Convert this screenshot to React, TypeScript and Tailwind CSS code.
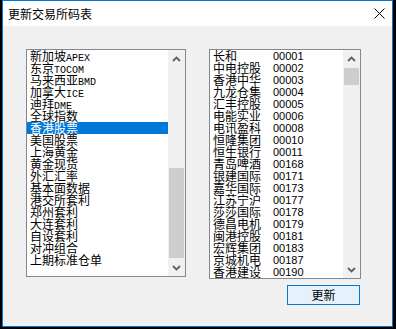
import React from "react";

const leftItems = [
  "新加坡APEX",
  "东京TOCOM",
  "马来西亚BMD",
  "加拿大ICE",
  "迪拜DME",
  "全球指数",
  "香港股票",
  "美国股票",
  "上海黄金",
  "黄金现货",
  "外汇汇率",
  "基本面数据",
  "港交所套利",
  "郑州套利",
  "大连套利",
  "自设套利",
  "对冲组合",
  "上期标准仓单",
];

const rightItems: [string, string][] = [
  ["长和", "00001"],
  ["中电控股", "00002"],
  ["香港中华", "00003"],
  ["九龙仓集", "00004"],
  ["汇丰控股", "00005"],
  ["电能实业", "00006"],
  ["电讯盈科", "00008"],
  ["恒隆集团", "00010"],
  ["恒生银行", "00011"],
  ["青岛啤酒", "00168"],
  ["银建国际", "00171"],
  ["嘉华国际", "00173"],
  ["江苏宁沪", "00177"],
  ["莎莎国际", "00178"],
  ["德昌电机", "00179"],
  ["闽港控股", "00181"],
  ["宏辉集团", "00183"],
  ["京城机电", "00187"],
  ["香港建设", "00190"],
];

// 中文 + 拉丁字母混排, 拉丁部分用等宽衬线
function Label({ text }: { text: string }) {
  const parts = text.split(/([A-Za-z]+)/).filter((p) => p !== "");
  return (
    <>
      {parts.map((p, i) =>
        /[A-Za-z]/.test(p) ? (
          <span key={i} className="font-['Liberation_Mono',monospace] text-[10px]">
            {p}
          </span>
        ) : (
          <span key={i}>{p}</span>
        )
      )}
    </>
  );
}

function Chevron({ up }: { up?: boolean }) {
  return (
    <svg width="9" height="6" viewBox="0 0 9 6">
      <polyline
        points={up ? "1,5 4.5,1.5 8,5" : "1,1 4.5,4.5 8,1"}
        fill="none"
        stroke="#606060"
        strokeWidth="1.8"
      />
    </svg>
  );
}

function ScrollBar({ thumbTop, thumbHeight }: { thumbTop: number; thumbHeight: number }) {
  return (
    <div className="flex w-[17px] shrink-0 flex-col bg-[#f0f0f0]">
      <div className="flex h-[17px] items-center justify-center">
        <Chevron up />
      </div>
      <div className="flex-1 px-px">
        <div className="bg-[#cdcdcd]" style={{ marginTop: thumbTop, height: thumbHeight }} />
      </div>
      <div className="flex h-[17px] items-center justify-center">
        <Chevron />
      </div>
    </div>
  );
}

export default function App() {
  return (
    <div className="h-[329px] w-[396px] overflow-hidden bg-black font-['Noto_Sans_CJK_SC',sans-serif] text-black">
      <div className="ml-[2px] flex h-[327px] w-[391px] flex-col border border-[#0078d7] bg-white">
        {/* 标题栏 */}
        <div className="flex h-[25px] shrink-0 items-center justify-between pl-[5px] pr-[7px]">
          <span className="text-[12px] leading-none">更新交易所码表</span>
          <svg width="11" height="11" viewBox="0 0 11 11">
            <path d="M0.5 0.5 L10.5 10.5 M10.5 0.5 L0.5 10.5" stroke="#000" strokeWidth="1" />
          </svg>
        </div>

        <div className="flex flex-1 flex-col bg-[#f0f0f0] pl-[23px] pt-[23px]">
          <div className="flex items-start gap-[23px]">
            {/* 左侧列表 */}
            <div className="flex h-[228px] w-[160px] border border-[#828790] bg-white">
              <div className="flex-1 overflow-hidden text-[12px] leading-[12px]">
                {leftItems.map((item) => {
                  const selected = item === "香港股票";
                  return (
                    <div
                      key={item}
                      className={`h-[12px] whitespace-nowrap pl-[3px] ${
                        selected ? "bg-[#0078d7] text-white" : ""
                      }`}
                    >
                      <Label text={item} />
                    </div>
                  );
                })}
              </div>
              <ScrollBar thumbTop={101} thumbHeight={90} />
            </div>

            {/* 右侧列表 */}
            <div className="flex h-[230px] w-[152px] border border-[#828790] bg-white">
              <div className="flex-1 overflow-hidden text-[12px] leading-[12px]">
                {rightItems.map(([name, code]) => (
                  <div key={code} className="flex h-[12px] whitespace-nowrap pl-[3px]">
                    <span className="w-[60px]">{name}</span>
                    <span className="font-['Liberation_Sans',sans-serif] text-[11px]">{code}</span>
                  </div>
                ))}
              </div>
              <ScrollBar thumbTop={1} thumbHeight={17} />
            </div>
          </div>

          <div className="mt-[6px] flex justify-end pr-[32px]">
            <button className="h-[20px] w-[73px] border border-[#0078d7] bg-[#e5f1fb] text-[12px] leading-none">
              更新
            </button>
          </div>
        </div>
      </div>
    </div>
  );
}
